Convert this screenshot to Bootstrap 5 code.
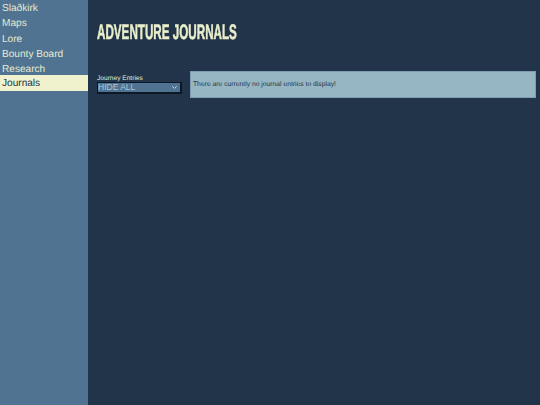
<!DOCTYPE html>
<html lang="en">
<head>
<meta charset="utf-8">
<title>Adventure Journals</title>
<link rel="stylesheet" href="https://cdn.jsdelivr.net/npm/bootstrap@5.3.0/dist/css/bootstrap.min.css">
<style>
html, body { height: 100%; }
body { background: #22344a; font-family: "Liberation Sans", Arial, sans-serif; overflow: hidden; text-rendering: geometricPrecision; }
.app-shell { height: 405px; }
.side-menu { width: 88px; background: #4f7390; }
.side-menu .list-group-item { background: transparent; border: 0; border-radius: 0; color: #e6ead2; font-size: 10.1px; line-height: 13.25px; padding: 2px 2px 0; }
.side-menu .list-group-item.active { background: #eff2cd; color: #22344a; }
.main-pane { padding: 0 4px 0 9px; }
.page-title { font-family: "Liberation Sans", sans-serif; font-weight: 700; font-size: 21px; line-height: 22px; color: #e9eecb; margin: 22px 0 27px; text-transform: uppercase; transform: scaleX(.555); transform-origin: left center; white-space: nowrap; -webkit-text-stroke: .5px #e9eecb; filter: url(#rough-edge); }
.filter-col { width: 85px; margin-top: 3px; }
.filter-label { display: block; color: #e6ead2; font-size: 6.6px; line-height: 7px; padding-top: 1px; margin: 0; }
.filter-select { background-color: #4f7390; background-image: url("data:image/svg+xml,%3csvg xmlns='http://www.w3.org/2000/svg' viewBox='0 0 16 16'%3e%3cpath fill='none' stroke='%23c5d8e2' stroke-linecap='round' stroke-linejoin='round' stroke-width='3' d='m2 5 6 6 6-6'/%3e%3c/svg%3e"); background-position: right 3px center; background-size: 5px 5px; border: 1px solid #0c1826; border-radius: 0; border-width: 1px 2px 2px 1px; color: #a9c8d8; font-size: 8.5px; line-height: 9px; height: 12px; padding: 0; }
.empty-note { background: #97b6c4; border: 1px solid #7f9db0; border-radius: 0; color: #1f3447; font-size: 6.75px; line-height: 9px; height: 27px; padding: 8px 2px; margin: 0 0 0 8px; }
</style>
</head>
<body>
<svg width="0" height="0" class="position-absolute" aria-hidden="true">
  <filter id="rough-edge" x="-2%" y="-10%" width="104%" height="120%">
    <feTurbulence type="fractalNoise" baseFrequency="0.7" numOctaves="2" seed="4"/>
    <feDisplacementMap in="SourceGraphic" scale="1.6"/>
  </filter>
</svg>
<div class="app-shell d-flex">
  <nav class="side-menu flex-shrink-0">
    <div class="list-group list-group-flush">
      <a class="list-group-item" href="#">Slaðkirk</a>
      <a class="list-group-item" href="#">Maps</a>
      <a class="list-group-item" href="#">Lore</a>
      <a class="list-group-item" href="#">Bounty Board</a>
      <a class="list-group-item" href="#">Research</a>
      <a class="list-group-item active" href="#">Journals</a>
    </div>
  </nav>
  <main class="main-pane flex-grow-1">
    <h1 class="page-title">Adventure Journals</h1>
    <div class="d-flex align-items-start">
      <div class="filter-col flex-shrink-0">
        <label class="filter-label" for="journey">Journey Entries</label>
        <select class="form-select filter-select" id="journey"><option>HIDE ALL</option></select>
      </div>
      <div class="alert empty-note flex-grow-1">There are currently no journal entries to display!</div>
    </div>
  </main>
</div>
<script src="https://cdn.jsdelivr.net/npm/bootstrap@5.3.0/dist/js/bootstrap.bundle.min.js"></script>
</body>
</html>
